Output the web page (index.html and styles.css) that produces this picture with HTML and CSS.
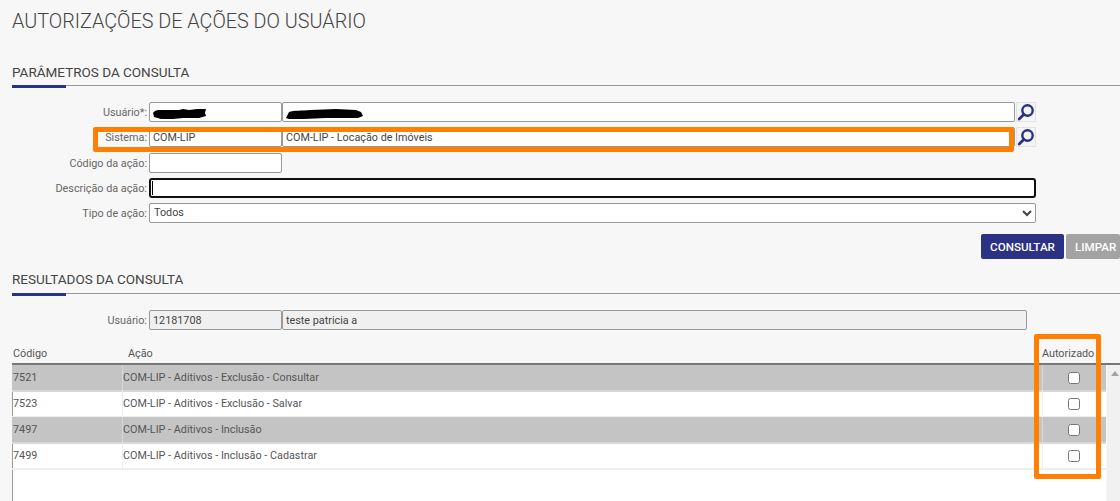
FILE: index.html
```html
<!DOCTYPE html>
<html>
  <head>
    <link rel="stylesheet" href="styles.css">
  </head>
  <body>
    <h1 class="page-title">AUTORIZAÇÕES DE AÇÕES DO USUÁRIO</h1>

    <h2 class="section-title section-params">PARÂMETROS DA CONSULTA</h2>

    <div class="form">
      <div class="form-row">
        <label class="form-label">Usuário*:</label>
        <div class="field field-code">
          <svg class="blob" width="54" height="12" viewBox="0 0 54 12"><path d="M0 5 C2 1 8 2 12 2 L26 2 L30 1 L36 2 L44 1 L53 1 L52 5 L53 8 L46 10 L30 10 L20 11 L8 11 L1 9 Z" fill="#000"/></svg>
        </div>
        <div class="field field-name">
          <svg class="blob" width="78" height="12" viewBox="0 0 78 12"><path d="M0 10 L3 4 C8 2 16 3 24 2 L50 1 L70 2 L75 4 L77 8 L72 10 L40 10 L18 11 L3 11 Z" fill="#000"/></svg>
        </div>
        <button class="search-btn">
          <svg width="18" height="18" viewBox="0 0 18 18"><circle cx="10.5" cy="7.5" r="5.2" fill="none" stroke="#2b3183" stroke-width="2.4"/><path d="M6.8 11.6 L2.2 16" stroke="#2b3183" stroke-width="2.8" stroke-linecap="round"/></svg>
        </button>
      </div>
      <div class="form-row">
        <label class="form-label">Sistema:</label>
        <div class="field field-code">COM-LIP</div>
        <div class="field field-name">COM-LIP - Locação de Imóveis</div>
        <button class="search-btn">
          <svg width="18" height="18" viewBox="0 0 18 18"><circle cx="10.5" cy="7.5" r="5.2" fill="none" stroke="#2b3183" stroke-width="2.4"/><path d="M6.8 11.6 L2.2 16" stroke="#2b3183" stroke-width="2.8" stroke-linecap="round"/></svg>
        </button>
      </div>
      <div class="form-row">
        <label class="form-label">Código da ação:</label>
        <div class="field field-code"></div>
      </div>
      <div class="form-row">
        <label class="form-label">Descrição da ação:</label>
        <div class="field field-wide field-focus"><span class="caret"></span></div>
      </div>
      <div class="form-row">
        <label class="form-label">Tipo de ação:</label>
        <select class="field field-wide field-select">
          <option>Todos</option>
        </select>
      </div>
    </div>

    <div class="actions">
      <button class="btn btn-primary">CONSULTAR</button>
      <button class="btn btn-clear">LIMPAR</button>
    </div>

    <h2 class="section-title section-results">RESULTADOS DA CONSULTA</h2>

    <div class="form-row result-user">
      <label class="form-label">Usuário:</label>
      <div class="field field-code field-readonly">12181708</div>
      <div class="field field-result field-readonly">teste patricia a</div>
    </div>

    <div class="grid-head">
      <div class="head-code">Código</div>
      <div class="head-action">Ação</div>
      <div class="head-auth">Autorizado</div>
    </div>

    <div class="results">
      <div class="rows">
        <div class="grid-row odd">
          <div class="cell">7521</div>
          <div class="cell">COM-LIP - Aditivos - Exclusão - Consultar</div>
          <div class="cell cell-check"><input type="checkbox"></div>
        </div>
        <div class="grid-row">
          <div class="cell">7523</div>
          <div class="cell">COM-LIP - Aditivos - Exclusão - Salvar</div>
          <div class="cell cell-check"><input type="checkbox"></div>
        </div>
        <div class="grid-row odd">
          <div class="cell">7497</div>
          <div class="cell">COM-LIP - Aditivos - Inclusão</div>
          <div class="cell cell-check"><input type="checkbox"></div>
        </div>
        <div class="grid-row">
          <div class="cell">7499</div>
          <div class="cell">COM-LIP - Aditivos - Inclusão - Cadastrar</div>
          <div class="cell cell-check"><input type="checkbox"></div>
        </div>
      </div>
      <div class="scrollbar"><span class="scroll-up"></span></div>
    </div>

    <!-- orange marks drawn over the screenshot -->
    <div class="mark mark-sistema"></div>
    <div class="mark mark-auth"></div>
  </body>
</html>
```

FILE: styles.css
```css
html,
body {
  height: 100%;
}

body {
  font-family: Roboto, Arial, sans-serif;
  font-size: 10.8px;
  margin: 0;
  padding: 0 0 0 12px;
  background-color: #f7f7f7;
  color: #555;
  overflow: hidden;
  position: relative;
}

.page-title {
  font-size: 19.8px;
  font-weight: 300;
  line-height: 24px;
  color: #444;
  margin: 0;
  padding-top: 10px;
}

.section-title {
  font-size: 13.5px;
  font-weight: 400;
  line-height: 18px;
  color: #444;
  margin: 0;
  padding-bottom: 5px;
  border-bottom: 1px solid #999;
  position: relative;
}

.section-title::after {
  content: "";
  position: absolute;
  left: 0;
  bottom: -3px;
  width: 54px;
  height: 3px;
  background-color: #2b3183;
}

.section-params {
  margin-top: 29px;
  padding-bottom: 4px;
}

.section-results {
  margin-top: 11px;
}

.form {
  margin-top: 16px;
  display: flex;
  flex-direction: column;
  gap: 5.25px;
}

.form-row {
  display: flex;
  align-items: center;
  height: 20px;
}

.form-label {
  width: 135px;
  padding: 1px 2px 0 0;
  text-align: right;
  color: #666;
  white-space: nowrap;
}

.field {
  box-sizing: border-box;
  height: 20px;
  line-height: 16px;
  padding: 1px 3px 0;
  background-color: white;
  border: 1px solid #999;
  border-radius: 2px;
  color: #444;
  font-family: inherit;
  font-size: 10.8px;
  white-space: nowrap;
  display: flex;
  align-items: center;
}

.field-code {
  width: 133px;
}

.field-name {
  width: 733px;
}

.field-wide {
  width: 887px;
}

.field-result {
  width: 745px;
}

.field-readonly {
  background-color: #f0f0f0;
}

.field-focus {
  border: 2px solid #101010;
  border-radius: 3px;
  padding: 0 0 0 1px;
}

.caret {
  display: block;
  width: 1px;
  height: 14px;
  background-color: black;
}

.field-select {
  display: block;
  padding: 0 0 1px;
  line-height: normal;
}

.blob {
  flex: none;
  margin-top: 2px;
}

.search-btn {
  box-sizing: border-box;
  width: 20px;
  height: 20px;
  margin-left: 1px;
  padding: 0;
  background-color: #f4f4f4;
  border: 1px solid #e2e2e2;
  display: flex;
  align-items: center;
  justify-content: center;
}

.actions {
  display: flex;
  justify-content: flex-end;
  gap: 2px;
  margin-top: 11px;
}

.btn {
  height: 25px;
  border: 0;
  border-radius: 2px;
  color: white;
  font-family: inherit;
  font-size: 11.6px;
  font-weight: 500;
  padding: 0 9px;
}

.btn-primary {
  width: 83px;
  background-color: #2b3183;
}

.btn-clear {
  width: 54px;
  padding: 0 0 0 9px;
  text-align: left;
  background-color: #a3a3a3;
}

.result-user {
  margin-top: 16px;
}

.grid-head,
.grid-row {
  display: grid;
  grid-template-columns: 111px 919px 64px;
}

.grid-head {
  height: 33px;
  line-height: 15px;
  padding-top: 16px;
  box-sizing: border-box;
  color: #555;
}

.head-code {
  padding-left: 1px;
}

.head-action {
  padding-left: 5px;
}

.results {
  display: flex;
  height: 138px;
  border-top: 2px solid #777;
}

.rows {
  width: 1094px;
  background-color: white;
  border-left: 1px solid #999;
}

.grid-row {
  height: 26px;
  margin-left: -1px;
}

.cell {
  box-sizing: border-box;
  padding-top: 1px;
  line-height: 24px;
  border-bottom: 2px solid #eee;
  white-space: nowrap;
}

.cell:first-child {
  padding-left: 1px;
  border-right: 1px solid #eee;
}

.odd .cell {
  background-color: #c4c4c4;
  border-bottom-color: #d8d8d8;
  border-right-color: #d8d8d8;
  border-left-color: #d8d8d8;
}

.cell-check {
  display: flex;
  align-items: center;
  justify-content: center;
  padding: 0 2px 0 0;
  border-left: 1px solid #eee;
}

.cell-check input {
  margin: 0;
  width: 12px;
  height: 12px;
}

.scrollbar {
  width: 14px;
  margin-left: 1px;
  background-color: #f1f1f1;
  position: relative;
}

.scroll-up {
  position: absolute;
  top: 6px;
  left: 4px;
  border-left: 4px solid transparent;
  border-right: 4px solid transparent;
  border-bottom: 5px solid #a3a3a3;
}

.mark {
  position: absolute;
  box-sizing: border-box;
  border: 5px solid #ff8000;
  border-radius: 2px;
}

.mark-sistema {
  left: 93px;
  top: 127px;
  width: 921px;
  height: 25px;
}

.mark-auth {
  left: 1034px;
  top: 334px;
  width: 67px;
  height: 145px;
}
```
